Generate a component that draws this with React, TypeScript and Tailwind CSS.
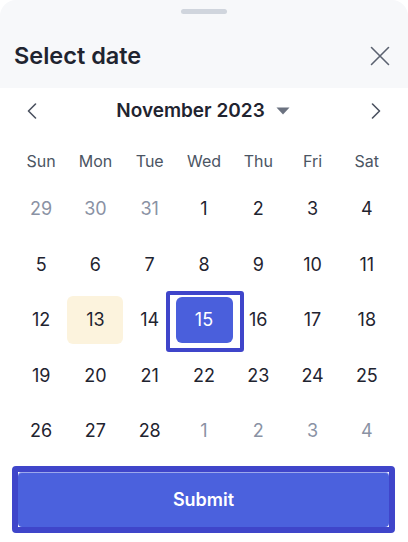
import React from 'react'

const weekdays = ['Sun', 'Mon', 'Tue', 'Wed', 'Thu', 'Fri', 'Sat']

type Day = { n: number; muted?: boolean }

// five weeks: trailing October days, the month, then leading days of the next
const days: Day[] = [
  { n: 29, muted: true },
  { n: 30, muted: true },
  { n: 31, muted: true },
  ...Array.from({ length: 28 }, (_, i) => ({ n: i + 1 })),
  { n: 1, muted: true },
  { n: 2, muted: true },
  { n: 3, muted: true },
  { n: 4, muted: true },
]

const TODAY = 13
const SELECTED = 15

function DayCell({ day }: { day: Day }) {
  const isToday = !day.muted && day.n === TODAY
  const isSelected = !day.muted && day.n === SELECTED

  if (isSelected) {
    return (
      <div className="flex items-center justify-center h-[55.5px]">
        <div className="relative flex items-center justify-center shrink-0 w-[57px] h-[46px] rounded-[6px] bg-[#4a5fdc] text-white text-[18px]">
          {day.n}
          <span className="absolute -left-[10px] -top-[6px] w-[78px] h-[61px] border-4 border-[#3f45ca] rounded-[3px] pointer-events-none" />
        </div>
      </div>
    )
  }

  return (
    <div className="flex items-center justify-center h-[55.5px]">
      <div
        className={
          'flex items-center justify-center shrink-0 w-[56px] h-[48px] rounded-[6px] text-[18px] ' +
          (isToday ? 'bg-[#fcf3dd] ' : '') +
          (day.muted ? 'text-[#8a92a4]' : 'text-[#1f2430]')
        }
      >
        {day.n}
      </div>
    </div>
  )
}

export default function App() {
  return (
    <div className="w-[408px] h-[542px] bg-white overflow-hidden" style={{ fontFamily: 'Inter, "Noto Sans", sans-serif' }}>
      {/* sheet header */}
      <div className="h-[88px] bg-[#f7f8fa] rounded-t-[16px] flex flex-col">
        <div className="mx-auto mt-[9px] w-[46px] h-[5px] rounded-full bg-[#d0d5dd]" />
        <div className="mt-[28px] h-[28px] flex items-center justify-between pl-[14px] pr-[18px]">
          <h1 className="text-[23.5px] font-semibold text-[#1f2430]">Select date</h1>
          <button className="w-[20px] h-[20px] text-[#5b6270]">
            <svg viewBox="0 0 20 20" width="20" height="20" fill="none" stroke="currentColor" strokeWidth="1.6" strokeLinecap="round">
              <path d="M1.5 1.5 18.5 18.5M18.5 1.5 1.5 18.5" />
            </svg>
          </button>
        </div>
      </div>

      {/* month navigation */}
      <div className="h-[46px] flex items-center justify-between pl-[26px] pr-[26px]">
        <button className="text-[#4b5260]">
          <svg viewBox="0 0 12 16" width="12" height="16" fill="none" stroke="currentColor" strokeWidth="1.6" strokeLinecap="round" strokeLinejoin="round">
            <path d="M9.5 1 2.5 8l7 7" />
          </svg>
        </button>
        <div className="flex items-center gap-[11px] pr-[2px]">
          <span className="text-[19px] font-semibold text-[#1f2430]">November 2023</span>
          <svg viewBox="0 0 14 8" width="14" height="8" className="text-[#6b7280]">
            <path d="M0.5 0.5h13L7 7.5z" fill="currentColor" />
          </svg>
        </div>
        <button className="text-[#4b5260]">
          <svg viewBox="0 0 12 16" width="12" height="16" fill="none" stroke="currentColor" strokeWidth="1.6" strokeLinecap="round" strokeLinejoin="round">
            <path d="M2.5 1 9.5 8l-7 7" />
          </svg>
        </button>
      </div>

      {/* weekday labels */}
      <div className="mt-[6px] h-[41px] grid grid-cols-7 px-[14px] items-center">
        {weekdays.map((d) => (
          <div key={d} className="text-center text-[16px] text-[#4b5563]">
            {d}
          </div>
        ))}
      </div>

      {/* day grid */}
      <div className="grid grid-cols-7 px-[14px]">
        {days.map((d, i) => (
          <DayCell key={i} day={d} />
        ))}
      </div>

      {/* submit */}
      <div className="mt-[7.5px] ml-[12px] w-[383px] border-[6px] border-[#3f45ca] rounded-[4px] bg-white">
        <button className="w-full h-[55px] rounded-[4px] bg-[#4b61dd] text-white text-[18px] font-semibold shadow-[inset_0_1px_0_rgba(255,255,255,0.45)]">
          Submit
        </button>
      </div>
    </div>
  )
}
